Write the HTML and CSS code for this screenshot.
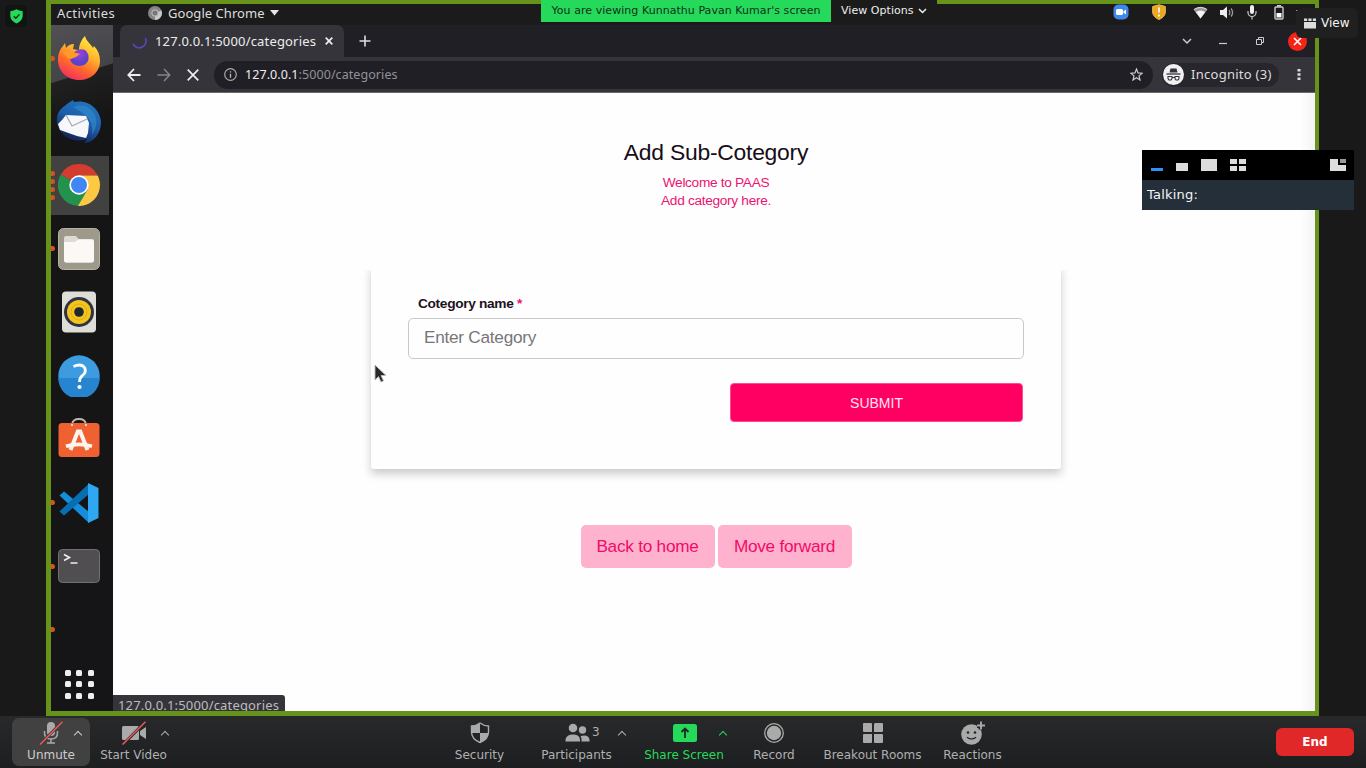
FILE: index.html
```html
<!DOCTYPE html>
<html lang="en">
<head>
<meta charset="utf-8">
<title>Meeting</title>
<link rel="stylesheet" href="styles.css">
</head>
<body>
<div class="meeting">
  <div class="shared">
    <header class="panel">
      <span class="activities">Activities</span>
      <svg class="panel-chrome" width="14" height="14" viewBox="0 0 14 14"><circle cx="7" cy="7" r="7" fill="#858585"/><path d="M7 7 13.500 4.500A7 7 0 0 1 7 14Z" fill="#c9c9c9"/><circle cx="7" cy="7" r="3.200" fill="#777" stroke="#c4c4c4"/></svg>
      <span class="appname">Google Chrome</span>
      <svg class="appcaret" width="10" height="6" viewBox="0 0 10 6"><path d="M0 0H9L4.500 5.500Z" fill="#e6e6e6"/></svg>
      <div class="tray">
        <svg width="16" height="16" viewBox="0 0 16 16"><rect x=".5" y=".5" width="15" height="15" rx="5" fill="#4087ed"/><rect x="3" y="5" width="7" height="6" rx="1.500" fill="#fff"/><path d="M10.500 7.300 13 5.500v5l-2.500-1.800Z" fill="#fff"/></svg>
        <svg width="14" height="16" viewBox="0 0 14 16"><path d="M7 .8 13.300 2.500V8C13.300 11.500 10.500 14 7 15.500 3.500 14 .7 11.500.7 8V2.500Z" fill="#eca61f" stroke="#f3bd54"/><path d="M7 3.500V8.500M7 10.500V12.500" stroke="#fff" stroke-width="1.700"/></svg>
        <svg width="15" height="13" viewBox="0 0 15 13"><path d="M.5 3.500Q7.500-1.800 14.500 3.500L7.500 12.500Z" fill="#999"/><path d="M2.800 6Q7.500 3 12.200 6L7.500 12.500Z" fill="#f5f5f5"/><path d="M1 3.500Q7.500-.6 14 3.500" fill="none" stroke="#ddd"/></svg>
        <svg width="14" height="13" viewBox="0 0 14 13"><path d="M0 4h3l4-3.500v12L3 9H0Z" fill="#eee"/><path d="M9 4q1.700 2.500 0 5M11 2.500q3.200 4 0 8" fill="none" stroke="#999" stroke-width="1.300"/></svg>
        <svg width="10" height="16" viewBox="0 0 10 16"><rect x="3" y="1" width="4" height="9" rx="2" fill="#eee"/><path d="M1 7v1.500a4 4 0 0 0 8 0V7M5 12.500V15.500" fill="none" stroke="#ccc" stroke-width="1.200"/></svg>
        <svg width="10" height="15" viewBox="0 0 10 15"><rect x="1" y="2" width="8" height="12" rx="1" fill="none" stroke="#ccc" stroke-width="1.400"/><path d="M3 .8H7" stroke="#ccc" stroke-width="1.600"/><rect x="2.500" y="8" width="5" height="4.500" fill="#fff"/></svg>
        <svg width="2" height="5" viewBox="0 0 2 5"><path d="M0 .5H2" stroke="#999"/></svg>
      </div>
    </header>
    <div class="desktop">
      <nav class="dock">
        <div class="app"><i class="dots"><b></b></i>
          <svg width="44" height="46" viewBox="0 0 44 46"><defs><linearGradient id="fx" x1=".8" y1="0" x2=".3" y2="1"><stop offset="0" stop-color="#fff34a"/><stop offset=".38" stop-color="#ffb62c"/><stop offset=".68" stop-color="#ff6a2b"/><stop offset="1" stop-color="#f42c62"/></linearGradient><radialGradient id="fp" cx=".5" cy=".3"><stop offset="0" stop-color="#a040df"/><stop offset="1" stop-color="#5b43c9"/></radialGradient></defs><path d="M28 1C29 6 34 9 36 13L37 11C41 15 43 20 43 26 43 37 34 45 22 45 10 45 1 36 1 25 1 19 3 14 6 11L8 8 9 13Q12 9 17 9L16 14Q20 15 22 15C22 9 25 4 28 1Z" fill="url(#fx)"/><path d="M13 22Q20 12 28 15 33 19 31 26 27 33 18 30 13 28 13 22Z" fill="url(#fp)"/><path d="M6 17Q14 16 23 19 20 22 14 24 9 23 6 17Z" fill="#ff9a25"/></svg></div>
        <div class="app">
          <svg width="46" height="46" viewBox="0 0 46 46"><defs><linearGradient id="tb" x1=".8" y1="0" x2=".3" y2="1"><stop offset="0" stop-color="#2379c2"/><stop offset=".5" stop-color="#1d5caa"/><stop offset="1" stop-color="#101b44"/></linearGradient></defs><path d="M11 5 14 3 17 1 18 3C31 0 44 9 45 23 45 34 38 44 28 44L31 40Q20 44 10 38C4 34 0 26 1 19 1 15 3 12 6 9Z" fill="url(#tb)"/><path d="M17 8Q31 3 39 16 43 25 36 36 38 23 29 16 23 11 17 8Z" fill="#348bcc" opacity=".65"/><path d="M10 16 30 17 33 24 32 34 30 39 21 37 4 31 2 25 6 21Z" fill="#f7f8fc"/><path d="M10 16 16 27 31 20" fill="none" stroke="#aaa6ad" stroke-width="1.200"/></svg></div>
        <div class="app current"><i class="dots four"><b></b><b></b><b></b><b></b></i>
          <svg width="42" height="42" viewBox="0 0 42 42"><path d="M21 21 2.800 10.500A21 21 0 0 1 39.200 10.500L38.500 11.500H21Z" fill="#d43c30"/><path d="M2.800 10.500A21 21 0 0 0 21 42L29.500 26Z" fill="#24914c"/><path d="M21 11.500H39.700A21 21 0 0 1 20 42L30 25Z" fill="#fdc843"/><circle cx="21" cy="21" r="9.700" fill="#fff"/><circle cx="21" cy="21" r="8" fill="#4285f4"/></svg></div>
        <div class="app"><i class="dots"><b></b></i>
          <svg width="42" height="42" viewBox="0 0 42 42"><rect x=".5" y=".5" width="41" height="41" rx="5" fill="#9e9a8b" stroke="#b4b1a3"/><path d="M6 12V10Q6 8 8 8H18L20.500 11H34Q36 11 36 13V32Q36 34.500 33.500 34.500H8.500Q6 34.500 6 32Z" fill="#dedad1"/><path d="M6 14H17L20 11.500H34Q36 11.500 36 14V32Q36 34.500 33.500 34.500H8.500Q6 34.500 6 32Z" fill="#fbf8f6"/></svg></div>
        <div class="app">
          <svg width="36" height="42" viewBox="0 0 36 42"><rect x="1" y=".5" width="34" height="41" rx="4" fill="#dfddd7"/><circle cx="18" cy="21" r="15" fill="#30333f"/><circle cx="18" cy="21" r="12" fill="#f2c51e"/><circle cx="18" cy="21" r="8" fill="none" stroke="#d7aa14" stroke-width=".8"/><circle cx="18" cy="21" r="4.800" fill="#202632"/></svg></div>
        <div class="app">
          <svg width="42" height="42" viewBox="0 0 42 42"><circle cx="21" cy="21" r="20.700" fill="#3d9ce0"/><path d="M.3 23H41.700A20.700 20.700 0 0 1 .3 23Z" fill="#2785d0"/><path d="M15.500 11.500Q23 8 26.500 12.500 29 17 24.500 20.500 21.500 22.500 21.500 27" fill="none" stroke="#fff" stroke-width="2.800"/><circle cx="21.500" cy="32" r="2.100" fill="#fff"/></svg></div>
        <div class="app">
          <svg width="42" height="42" viewBox="0 0 42 42"><path d="M14 7V6Q15 1 21 1T28 6V9" fill="none" stroke="#c1b6a9" stroke-width="1.800"/><rect x=".5" y="5" width="41" height="34" rx="3.500" fill="#f06132"/><path d="M14 6V8M28 6V8" stroke="#e8ddd0" stroke-width="1.800"/><path d="M12.500 32 19.800 13.500H22.200L29.500 32" fill="none" stroke="#fff4ee" stroke-width="4"/><path d="M8 28.300Q21 24.500 34 28.300" fill="none" stroke="#fff4ee" stroke-width="3.600"/></svg></div>
        <div class="app"><i class="dots"><b></b></i>
          <svg width="42" height="42" viewBox="0 0 42 42"><path d="M1.500 13.500 6 9.500 31 30V41Z" fill="#168ddb"/><path d="M1.500 29.500 31 1.500V12L6 33.500Z" fill="#086eb2"/><path d="M30 1 40.500 6V36L30 41Z" fill="#2fa8f3"/></svg></div>
        <div class="app"><i class="dots"><b></b></i>
          <svg width="42" height="34" viewBox="0 0 42 34"><rect x=".5" y=".5" width="41" height="33" rx="4" fill="#504e50" stroke="#727072"/><path d="M6 5.500 11.500 8.500 6 11.500M12.500 14H19.500" fill="none" stroke="#eee" stroke-width="1.600"/></svg></div>
        <div class="app"><i class="dots"><b></b></i></div>
        <div class="grid-launcher"><i></i><i></i><i></i><i></i><i></i><i></i><i></i><i></i><i></i></div>
      </nav>
      <section class="browser">
        <div class="tabs">
          <div class="tab">
            <svg width="15" height="15" viewBox="0 0 15 15"><path d="M13.300 3.800A6.500 6.500 0 0 1 1 10" fill="none" stroke="#5547b4" stroke-width="1.700"/></svg>
            <span class="tab-title">127.0.0.1:5000/categories</span>
            <svg width="8" height="8" viewBox="0 0 8 8"><path d="M.7.700 7.300 7.300M7.300.700.7 7.300" stroke="#eee" stroke-width="1.700"/></svg>
          </div>
          <svg class="newtab" width="12" height="12" viewBox="0 0 12 12"><path d="M6 .5V11.500M.5 6H11.500" stroke="#ddd" stroke-width="1.600"/></svg>
          <div class="window-controls">
            <svg width="10" height="7" viewBox="0 0 10 7"><path d="M1 1 5 5 9 1" fill="none" stroke="#ccc" stroke-width="1.500"/></svg>
            <svg width="8" height="8" viewBox="0 0 8 8"><path d="M0 6.500H8" stroke="#ccc" stroke-width="1.200"/></svg>
            <svg width="8" height="8" viewBox="0 0 8 8"><path d="M.5 2.500H5.500V7.500H.5ZM2.500 2.500V.5H7.500V5.500H5.500" fill="none" stroke="#ccc"/></svg>
            <svg width="19" height="19" viewBox="0 0 19 19"><circle cx="9.500" cy="9.500" r="9.500" fill="#f42516"/><path d="M6 6 13 13M13 6 6 13" stroke="#fff" stroke-width="1.600"/></svg>
          </div>
        </div>
        <div class="toolbar">
          <svg width="14" height="14" viewBox="0 0 14 14"><path d="M13.500 7H1.500M7 1 1.300 7 7 13" fill="none" stroke="#eee" stroke-width="1.800"/></svg>
          <svg width="14" height="14" viewBox="0 0 14 14"><path d="M.5 7H12.500M7 1 12.700 7 7 13" fill="none" stroke="#858589" stroke-width="1.500"/></svg>
          <svg width="12" height="12" viewBox="0 0 12 12"><path d="M.7.700 11.300 11.300M11.300.700.7 11.300" stroke="#eee" stroke-width="1.700"/></svg>
          <div class="address">
            <svg width="13" height="13" viewBox="0 0 13 13"><circle cx="6.500" cy="6.500" r="5.800" fill="none" stroke="#aaa" stroke-width="1.200"/><path d="M6.500 5.700V9.700M6.500 3.200V4.600" stroke="#bbb" stroke-width="1.300"/></svg>
            <span class="url"><em>127.0.0.1</em>:5000/categories</span>
            <svg class="star" width="13" height="13" viewBox="0 0 13 13"><path d="M6.500 1 8 4.900 12.200 5.200 9 7.900 10 12 6.500 9.800 3 12 4 7.900.8 5.200 5 4.900Z" fill="none" stroke="#ccc" stroke-width="1.200"/></svg>
          </div>
          <div class="incognito">
            <svg width="21" height="21" viewBox="0 0 21 21"><circle cx="10.500" cy="10.500" r="10.500" fill="#f1f1f3"/><path d="M6.500 8.500 7.500 4.500H13.500L14.500 8.500Z" fill="#333239"/><path d="M3.500 10H17.500" stroke="#333239" stroke-width="1.300"/><path d="M5 12.500H9V14.500L8 16H6L5 14.500ZM12 12.500H16V14.500L15 16H13L12 14.500ZM9 13.500H12" fill="none" stroke="#333239" stroke-width="1.100"/></svg>
            <span>Incognito (3)</span>
          </div>
          <svg class="kebab" width="4" height="13" viewBox="0 0 4 13"><path d="M.5 1H3.500V3.500H.5ZM.5 5.200H3.500V7.700H.5ZM.5 9.500H3.500V12H.5Z" fill="#ddd"/></svg>
        </div>
        <main class="page">
          <h1>Add Sub-Cotegory</h1>
          <p class="welcome">Welcome to PAAS<br>Add category here.</p>
          <form class="card">
            <label for="category">Cotegory name <span>*</span></label>
            <input id="category" type="text" placeholder="Enter Category">
            <button class="submit" type="button">SUBMIT</button>
          </form>
          <div class="links"><a>Back to home</a><a>Move forward</a></div>
        </main>
        <div class="status">127.0.0.1:5000/categories</div>
      </section>
    </div>
  </div>

  <footer class="controls">
    <div class="control unmute">
      <svg width="24" height="24" viewBox="0 0 24 24"><rect x="8" y="1" width="8" height="14" rx="4" fill="#aaa"/><path d="M5.500 10V12Q5.500 18 12 18T18.500 12V10M12 18V22M8 22H16" fill="none" stroke="#aaa" stroke-width="1.500"/><path d="M1 23 23.500.8" stroke="#414141" stroke-width="3"/><path d="M1 23.500 23.500.8" stroke="#ef5656" stroke-width="1.500"/></svg>
      <span>Unmute</span><i class="caret"></i>
    </div>
    <div class="control video">
      <svg width="26" height="24" viewBox="0 0 26 24"><rect x="1" y="5" width="17" height="14" rx="1.500" fill="#aaa"/><path d="M19 10 25 6V18L19 14Z" fill="#aaa"/><path d="M2 23.500 24.500.8" stroke="#2a2b2c" stroke-width="3"/><path d="M1.500 23.500 24.500.8" stroke="#ef5656" stroke-width="1.500"/></svg>
      <span>Start Video</span><i class="caret"></i>
    </div>
    <div class="control security">
      <svg width="20" height="22" viewBox="0 0 20 22"><path d="M10 1Q14 4 18.500 4V10Q18.500 17 10 20.500 1.500 17 1.500 10V4Q6 4 10 1Z" fill="#222426" stroke="#aaa" stroke-width="1.400"/><path d="M10 1V11H1.500V4Q6 4 10 1ZM10 11H18.500Q18 17.500 10 20.500Z" fill="#aaa"/></svg>
      <span>Security</span>
    </div>
    <div class="control participants">
      <svg width="26" height="20" viewBox="0 0 26 20"><circle cx="9" cy="5" r="4.300" fill="#aaa"/><circle cx="18.500" cy="7" r="3.700" fill="#aaa"/><path d="M1.500 18.500V16.500Q2.500 11.500 9 11.500T16 16.500V18.500ZM17.500 18.500V15.500L16.500 13Q24.500 11 25.500 16.500V18.500Z" fill="#aaa"/></svg>
      <span>Participants</span><small>3</small><i class="caret"></i>
    </div>
    <div class="control share">
      <svg width="24" height="18" viewBox="0 0 24 18"><rect width="24" height="18" rx="2.500" fill="#25d95a"/><path d="M12 14V5M8.500 8 12 4.500 15.500 8" fill="none" stroke="#202523" stroke-width="1.800"/></svg>
      <span>Share Screen</span><i class="caret"></i>
    </div>
    <div class="control record">
      <svg width="20" height="20" viewBox="0 0 20 20"><circle cx="10" cy="10" r="9.300" fill="none" stroke="#aaa" stroke-width="1.300"/><circle cx="10" cy="10" r="7.200" fill="#aaa"/></svg>
      <span>Record</span>
    </div>
    <div class="control rooms">
      <svg width="20" height="20" viewBox="0 0 20 20"><path d="M1 0H8Q9 0 9 1V9H1Q0 9 0 8V1Q0 0 1 0ZM12 0H19Q20 0 20 1V8Q20 9 19 9H11V1ZM0 12Q0 11 1 11H9V19Q9 20 8 20H1Q0 20 0 19ZM11 11H19Q20 11 20 12V19Q20 20 19 20H12Q11 20 11 19Z" fill="#aaa"/></svg>
      <span>Breakout Rooms</span>
    </div>
    <div class="control reactions">
      <svg width="24" height="24" viewBox="0 0 24 24"><circle cx="10.500" cy="13.500" r="10.300" fill="#aaa"/><circle cx="7" cy="11.500" r="1.300" fill="#242628"/><circle cx="14" cy="11.500" r="1.300" fill="#242628"/><path d="M6 16.200Q10.500 19.700 15 16.200" fill="none" stroke="#242628" stroke-width="1.300"/><path d="M20 .5V8.500M16 4.500H24" stroke="#242628" stroke-width="5"/><path d="M20 .5V8.500M16 4.500H24" stroke="#aaa" stroke-width="1.900"/></svg>
      <span>Reactions</span>
    </div>
    <button class="end" type="button">End</button>
  </footer>

  <div class="secure"><svg width="13" height="15" viewBox="0 0 13 15"><path d="M6.500.3Q9 2 12.700 2.200V7Q12.500 12 6.500 14.500.5 12 .3 7V2.200Q4 2 6.500.3Z" fill="#25d95a"/><path d="M3.700 7.200 5.800 9.300 9.500 5.400" fill="none" stroke="#152019" stroke-width="1.300"/></svg></div>
  <div class="banner"><strong>You are viewing Kunnathu Pavan Kumar's screen</strong><span>View Options<svg width="9" height="6" viewBox="0 0 9 6"><path d="M1 1 4.500 4.500 8 1" fill="none" stroke="#eee" stroke-width="1.500"/></svg></span></div>
  <div class="view"><svg width="12" height="11" viewBox="0 0 12 11"><path d="M0 4H12V10.500H0ZM0 .5H3.200V3H0ZM4.400 .5H7.600V3H4.400ZM8.800 .5H12V3H8.800Z" fill="#ddd"/></svg><span>View</span></div>
  <aside class="floating">
    <div class="layouts">
      <svg width="196" height="12" viewBox="0 0 196 12"><path d="M0 9H12V12H0Z" fill="#2e91f5"/><path d="M25 4H37V12H25ZM50 0H66V12H50ZM79 0H86V5H79ZM88 0H95V5H88ZM79 7H86V12H79ZM88 7H95V12H88ZM179 0H187V6H195V12H179Z" fill="#ddd"/><path d="M189 0H195V4H189Z" fill="#999"/></svg>
    </div>
    <div class="talking">Talking:</div>
  </aside>
  <svg class="cursor" width="13" height="20" viewBox="0 0 13 20"><path d="M1 1V16L4.500 12.500 7 18 9.500 16.800 7 11.500H12Z" fill="#292929" stroke="#bbb" stroke-width=".9"/></svg>
</div>
</body>
</html>
```
FILE: styles.css
```css
* { box-sizing: border-box; }
body { margin: 0; background: #191919; font-family: "DejaVu Sans", sans-serif; }
svg { display: block; flex: none; }
i, em { font-style: normal; }
.meeting { position: relative; width: 1366px; height: 768px; overflow: hidden; }
.shared { width: 1273px; height: 716px; margin-left: 46px; border: solid #67931b; border-width: 4px 4px 5px 5px; display: flex; flex-direction: column; }

.panel { height: 21px; flex: none; background: #1b1b1b; display: flex; align-items: center; padding: 0 17px 4px 6px; color: #dedede; font: 13px/18px "Noto Sans", sans-serif; white-space: nowrap; }
.activities { width: 91px; letter-spacing: .4px; }
.panel-chrome { margin-right: 6px; }
.appname { width: 102px; letter-spacing: .05px; }
.tray { margin-left: auto; display: flex; align-items: center; padding-bottom: 1px; }
.tray svg:nth-child(2) { margin-left: 22.500px; }
.tray svg:nth-child(3) { margin-left: 27.500px; }
.tray svg:nth-child(4) { margin-left: 12px; }
.tray svg:nth-child(5) { margin-left: 13px; }
.tray svg:nth-child(6) { margin-left: 17px; }
.tray svg:nth-child(7) { margin-left: 12px; }

.desktop { flex: 1; min-height: 0; display: flex; }
.dock { width: 62px; flex: none; background: linear-gradient(162deg, #505055 0, #444448 55px, #202020 56px, #151515 105px, #151517 100%); display: flex; flex-direction: column; padding-top: 1.500px; overflow: hidden; }
.app { width: 58px; height: 63.500px; flex: none; display: flex; align-items: center; justify-content: center; position: relative; padding-right: 2px; }
.app.current { background: linear-gradient(#414140, #414140) 0 2px / 58px 59px no-repeat; }
.dots { position: absolute; left: 0; top: 0; height: 100%; display: flex; flex-direction: column; justify-content: center; gap: 3px; }
.dots b { width: 4px; height: 5px; border-radius: 0 3px 3px 0; background: #d3541d; }
.grid-launcher { display: grid; grid-template-columns: repeat(3, 6px); grid-auto-rows: 6px; gap: 5.300px; padding: 8.500px 0 0 14px; }
.grid-launcher i { background: #eee; border-radius: 1.500px; }

.browser { position: relative; flex: 1; min-width: 0; display: flex; flex-direction: column; font-family: "Noto Sans", sans-serif; }
.tabs { height: 32px; flex: none; display: flex; align-items: center; background: #201f25; padding: 0 8px 0 7px; }
.tab { width: 224px; height: 32px; border-radius: 7px 7px 0 0; background: #35343a; display: flex; align-items: center; padding-left: 12px; color: #ededed; font-size: 13px; }
.tab-title { width: 170px; margin-left: 8px; white-space: nowrap; letter-spacing: .17px; }
.newtab { margin-left: 15px; }
.window-controls { margin-left: auto; display: flex; align-items: center; }
.window-controls svg:nth-child(2) { margin-left: 27px; }
.window-controls svg:nth-child(3) { margin-left: 29px; }
.window-controls svg:nth-child(4) { margin-left: 24px; }
.toolbar { height: 36px; flex: none; display: flex; align-items: center; background: #35343a; border-bottom: 1px solid #69686d; padding: 0 14px 0 14px; }
.toolbar > svg:nth-child(2) { margin-left: 16px; }
.toolbar > svg:nth-child(3) { margin-left: 16px; }
.address { width: 939px; height: 28px; border-radius: 14px; background: #201f25; margin-left: 15px; padding: 0 10px; display: flex; align-items: center; }
.url { margin-left: 8px; font-size: 12.500px; letter-spacing: .07px; color: #929297; }
.url em { color: #eee; }
.star { margin-left: auto; }
.incognito { width: 117px; height: 24px; border-radius: 12px; background: #27262c; margin-left: 9px; padding-left: 1px; display: flex; align-items: center; color: #ddd; font-size: 13px; letter-spacing: .27px; line-height: 16px; white-space: nowrap; }
.incognito span { margin: -1px 0 0 7px; }
.kebab { margin-left: auto; }

.page { flex: 1; min-height: 0; background: linear-gradient(90deg, transparent 1188px, #f4f2f5), #fefefe; display: flex; flex-direction: column; align-items: center; padding: 45px 0 0 4px; font-family: "Liberation Sans", sans-serif; }
.page h1 { margin: 0; font-size: 22.900px; letter-spacing: -.25px; line-height: 28px; font-weight: 400; color: #160d17; }
.welcome { margin: 8px 0 0; font-size: 13.700px; letter-spacing: -.32px; line-height: 18.200px; color: #ed1370; text-align: center; }
.card { width: 690px; height: 204px; margin-top: 54.600px; padding: 30px 38px 0; border-radius: 3px; box-shadow: 0 5px 8px rgba(25, 20, 35, .22); -webkit-mask: linear-gradient(transparent 12px, #000 38px); mask: linear-gradient(transparent 12px, #000 38px); mask-clip: no-clip; background: #fefefe; display: flex; flex-direction: column; }
.card { mask: none; -webkit-mask: none; clip-path: inset(5px -20px -20px); }
.card label { margin-left: 9px; font-size: 13.700px; letter-spacing: -.32px; line-height: 18px; font-weight: 700; color: #1d1222; }
.card label span { color: #ed1370; }
.card input { height: 41px; margin: 5px 0 0 -1px; width: 616px; border: 1px solid #c9c9cc; border-radius: 5px; padding: 0 15px 2px; background: transparent; font: 17.200px "Liberation Sans", sans-serif; letter-spacing: -.25px; }
.card input::placeholder { color: #77757a; opacity: 1; }
.submit { align-self: flex-end; width: 293px; height: 39px; margin: 24px 0 0; border: 1px solid #ff4c91; border-radius: 4px; background: #ff0062; color: #ffe4ef; font: 14px "Liberation Sans", sans-serif; }
.links { display: flex; gap: 3px; margin-top: 56px; }
.links a { width: 134px; height: 43px; border-radius: 5px; background: #ffb2ce; color: #f40967; font-size: 17.200px; letter-spacing: -.24px; line-height: 43px; text-align: center; }
.status { position: absolute; left: 0; bottom: 0; width: 172px; height: 16px; border-radius: 0 3px 0 0; overflow: hidden; background: #35343a; color: #bcbcbe; padding-left: 5px; font-size: 13px; letter-spacing: .17px; line-height: 21px; white-space: nowrap; }

.controls { height: 52px; background: linear-gradient(#27292b, #1d1e1f); display: flex; align-items: flex-start; padding: 2px 12px 0; }
.control { position: relative; height: 48px; flex: none; display: flex; flex-direction: column; align-items: center; padding-top: 31px; color: #b0b0b0; font-size: 12px; line-height: 14px; white-space: nowrap; border-radius: 7px; }
.control > svg { margin-top: -31px; height: 30px; }
.unmute { width: 78px; background: #414141; color: #ccc; }
.video { width: 67px; margin-left: 10px; }
.security { width: 49px; margin-left: 288px; }
.participants { width: 71px; margin-left: 37px; }
.share { width: 80px; margin-left: 32px; color: #25d95a; }
.share > svg { margin-left: 1px; }
.record { width: 42px; margin-left: 29px; }
.rooms { width: 99px; margin-left: 28px; }
.reactions { width: 59px; margin-left: 21px; }
.control small { position: absolute; left: 51px; top: 7px; font-size: 12px; }
.caret { position: absolute; top: 14px; width: 6px; height: 6px; border: solid currentColor; border-width: 1.500px 0 0 1.500px; transform: rotate(45deg); }
.unmute .caret { left: 63px; }
.video .caret { left: 62px; }
.participants .caret { left: 78px; }
.share .caret { left: 76px; }
.end { width: 78px; height: 28px; margin: 10px 0 0 auto; border: 0; border-radius: 6px; background: #e02828; color: #fff; font: 700 12px "DejaVu Sans", sans-serif; }

.secure { position: absolute; left: 5px; top: 5px; width: 22px; height: 22px; border-radius: 4px; background: #101412; display: grid; place-items: center; }
.banner { position: absolute; left: 541px; top: 0; height: 22px; display: flex; font-size: 11px; letter-spacing: .05px; line-height: 22px; white-space: nowrap; }
.banner strong { width: 290px; background: #25d95a; color: #10301a; font-weight: 400; text-align: center; }
.banner span { width: 106px; background: #1b1b1b; color: #eee; padding-left: 10px; border-radius: 0 0 5px 0; display: flex; align-items: center; gap: 4px; }
.view { position: absolute; left: 1296px; top: 8px; width: 62px; height: 30px; border-radius: 6px; background: #202020; color: #f4f4f4; font-size: 12px; display: flex; align-items: center; padding-left: 8px; gap: 5px; }
.floating { position: absolute; left: 1142px; top: 150px; width: 212px; color: #f5f5f5; font-size: 13px; }
.layouts { height: 30px; background: #000; padding: 9px 0 0 9px; }
.talking { height: 30px; line-height: 29px; padding-left: 5px; background: #242f39; letter-spacing: .2px; }
.cursor { position: absolute; left: 374px; top: 364px; }
```
